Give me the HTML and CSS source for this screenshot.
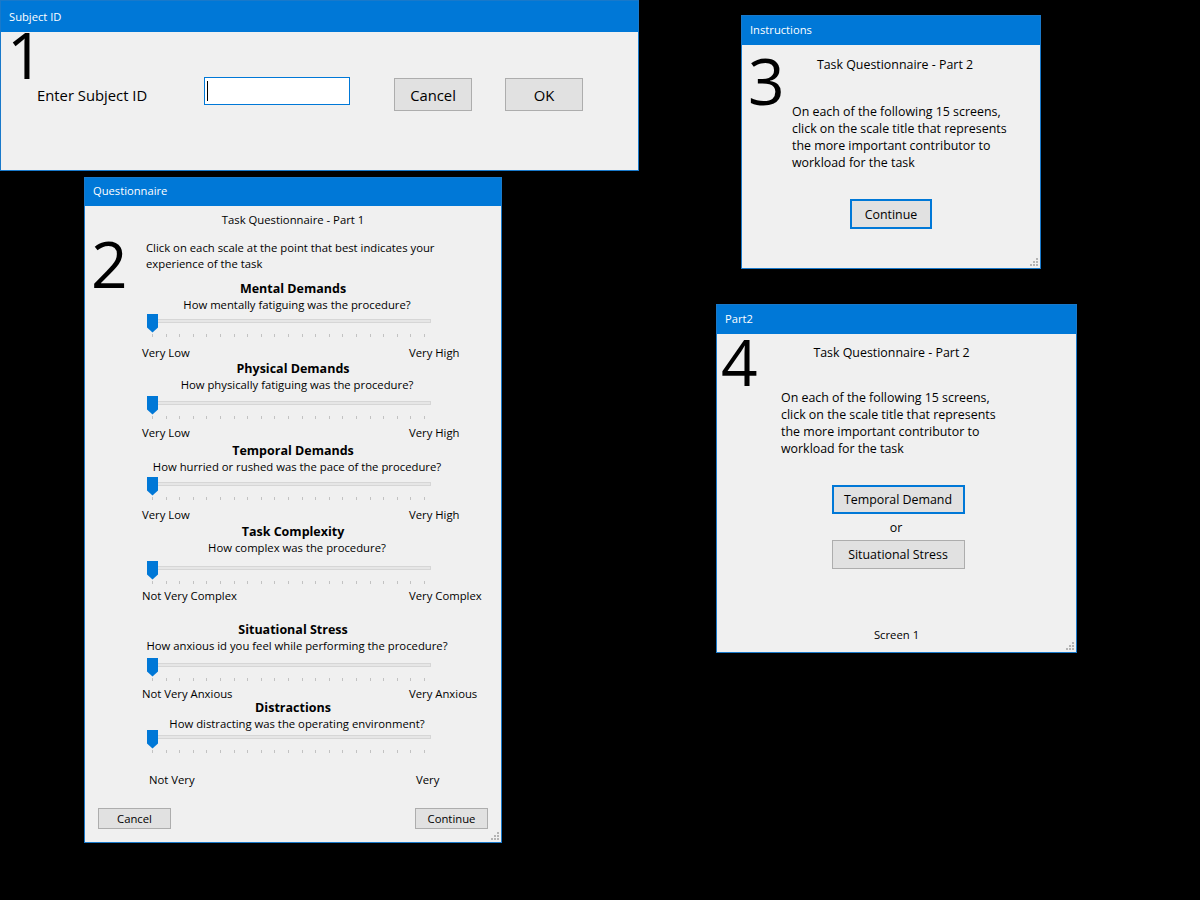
FILE: index.html
```html
<!DOCTYPE html>
<html lang="en">
<head>
<meta charset="utf-8">
<title>Workload questionnaire windows</title>
<link rel="stylesheet" href="styles.css">
</head>
<body class="desktop">

<section class="win win-subject">
  <header class="titlebar">Subject ID</header>
  <div class="win-body subject-body">
    <span class="marker marker-1">1</span>
    <div class="subject-row">
      <label class="subject-label">Enter Subject ID</label>
      <div class="textbox"><span class="caret"></span></div>
      <button class="btn btn-lg btn-cancel">Cancel</button>
      <button class="btn btn-lg">OK</button>
    </div>
  </div>
</section>

<section class="win win-quest">
  <header class="titlebar">Questionnaire</header>
  <div class="win-body quest-body">
    <span class="marker marker-2">2</span>
    <h1 class="quest-heading">Task Questionnaire - Part 1</h1>
    <p class="quest-intro">Click on each scale at the point that best indicates your<br>experience of the task</p>

    <div class="scale scale-mental">
      <h2 class="scale-title">Mental Demands</h2>
      <p class="scale-q">How mentally fatiguing was the procedure?</p>
      <div class="slider">
        <div class="track"><svg class="thumb" width="11" height="19" viewBox="0 0 11 19"><path d="M0 0H11V13.5L5.5 18.5L0 13.5Z" fill="#0078d7"/></svg></div>
        <div class="ticks"><i></i><i></i><i></i><i></i><i></i><i></i><i></i><i></i><i></i><i></i><i></i><i></i><i></i><i></i><i></i><i></i><i></i><i></i><i></i><i></i><i></i></div>
      </div>
      <div class="scale-ends"><span>Very Low</span><span>Very High</span></div>
    </div>

    <div class="scale scale-physical">
      <h2 class="scale-title">Physical Demands</h2>
      <p class="scale-q">How physically fatiguing was the procedure?</p>
      <div class="slider">
        <div class="track"><svg class="thumb" width="11" height="19" viewBox="0 0 11 19"><path d="M0 0H11V13.5L5.5 18.5L0 13.5Z" fill="#0078d7"/></svg></div>
        <div class="ticks"><i></i><i></i><i></i><i></i><i></i><i></i><i></i><i></i><i></i><i></i><i></i><i></i><i></i><i></i><i></i><i></i><i></i><i></i><i></i><i></i><i></i></div>
      </div>
      <div class="scale-ends"><span>Very Low</span><span>Very High</span></div>
    </div>

    <div class="scale scale-temporal">
      <h2 class="scale-title">Temporal Demands</h2>
      <p class="scale-q">How hurried or rushed was the pace of the procedure?</p>
      <div class="slider">
        <div class="track"><svg class="thumb" width="11" height="19" viewBox="0 0 11 19"><path d="M0 0H11V13.5L5.5 18.5L0 13.5Z" fill="#0078d7"/></svg></div>
        <div class="ticks"><i></i><i></i><i></i><i></i><i></i><i></i><i></i><i></i><i></i><i></i><i></i><i></i><i></i><i></i><i></i><i></i><i></i><i></i><i></i><i></i><i></i></div>
      </div>
      <div class="scale-ends"><span>Very Low</span><span>Very High</span></div>
    </div>

    <div class="scale scale-complexity">
      <h2 class="scale-title">Task Complexity</h2>
      <p class="scale-q">How complex was the procedure?</p>
      <div class="slider">
        <div class="track"><svg class="thumb" width="11" height="19" viewBox="0 0 11 19"><path d="M0 0H11V13.5L5.5 18.5L0 13.5Z" fill="#0078d7"/></svg></div>
        <div class="ticks"><i></i><i></i><i></i><i></i><i></i><i></i><i></i><i></i><i></i><i></i><i></i><i></i><i></i><i></i><i></i><i></i><i></i><i></i><i></i><i></i><i></i></div>
      </div>
      <div class="scale-ends"><span>Not Very Complex</span><span>Very Complex</span></div>
    </div>

    <div class="scale scale-stress">
      <h2 class="scale-title">Situational Stress</h2>
      <p class="scale-q">How anxious id you feel while performing the procedure?</p>
      <div class="slider">
        <div class="track"><svg class="thumb" width="11" height="19" viewBox="0 0 11 19"><path d="M0 0H11V13.5L5.5 18.5L0 13.5Z" fill="#0078d7"/></svg></div>
        <div class="ticks"><i></i><i></i><i></i><i></i><i></i><i></i><i></i><i></i><i></i><i></i><i></i><i></i><i></i><i></i><i></i><i></i><i></i><i></i><i></i><i></i><i></i></div>
      </div>
      <div class="scale-ends"><span>Not Very Anxious</span><span>Very Anxious</span></div>
    </div>

    <div class="scale scale-distract">
      <h2 class="scale-title">Distractions</h2>
      <p class="scale-q">How distracting was the operating environment?</p>
      <div class="slider">
        <div class="track"><svg class="thumb" width="11" height="19" viewBox="0 0 11 19"><path d="M0 0H11V13.5L5.5 18.5L0 13.5Z" fill="#0078d7"/></svg></div>
        <div class="ticks"><i></i><i></i><i></i><i></i><i></i><i></i><i></i><i></i><i></i><i></i><i></i><i></i><i></i><i></i><i></i><i></i><i></i><i></i><i></i><i></i><i></i></div>
      </div>
      <div class="scale-ends"><span>Not Very</span><span>Very</span></div>
    </div>

    <div class="quest-footer">
      <button class="btn btn-sm">Cancel</button>
      <button class="btn btn-sm">Continue</button>
    </div>
  </div>
  <svg class="grip" width="10" height="10" viewBox="0 0 10 10"><g fill="#b4b4b4"><rect x="7" y="1" width="2" height="2"/><rect x="4" y="4" width="2" height="2"/><rect x="7" y="4" width="2" height="2"/><rect x="1" y="7" width="2" height="2"/><rect x="4" y="7" width="2" height="2"/><rect x="7" y="7" width="2" height="2"/></g></svg>
</section>

<section class="win win-instr">
  <header class="titlebar">Instructions</header>
  <div class="win-body instr-body">
    <span class="marker marker-3">3</span>
    <h1 class="part2-heading">Task Questionnaire - Part 2</h1>
    <p class="part2-text">On each of the following 15 screens,<br>click on the scale title that represents<br>the more important contributor to<br>workload for the task</p>
    <div class="instr-actions">
      <button class="btn btn-md btn-default">Continue</button>
    </div>
  </div>
  <svg class="grip" width="10" height="10" viewBox="0 0 10 10"><g fill="#b4b4b4"><rect x="7" y="1" width="2" height="2"/><rect x="4" y="4" width="2" height="2"/><rect x="7" y="4" width="2" height="2"/><rect x="1" y="7" width="2" height="2"/><rect x="4" y="7" width="2" height="2"/><rect x="7" y="7" width="2" height="2"/></g></svg>
</section>

<section class="win win-part2">
  <header class="titlebar">Part2</header>
  <div class="win-body part2-body">
    <span class="marker marker-4">4</span>
    <h1 class="part2-heading part2-heading-b">Task Questionnaire - Part 2</h1>
    <p class="part2-text part2-text-b">On each of the following 15 screens,<br>click on the scale title that represents<br>the more important contributor to<br>workload for the task</p>
    <div class="choice">
      <button class="btn btn-choice btn-default">Temporal Demand</button>
      <span class="choice-or">or</span>
      <button class="btn btn-choice">Situational Stress</button>
    </div>
    <p class="screen-no">Screen 1</p>
  </div>
  <svg class="grip" width="10" height="10" viewBox="0 0 10 10"><g fill="#b4b4b4"><rect x="7" y="1" width="2" height="2"/><rect x="4" y="4" width="2" height="2"/><rect x="7" y="4" width="2" height="2"/><rect x="1" y="7" width="2" height="2"/><rect x="4" y="7" width="2" height="2"/><rect x="7" y="7" width="2" height="2"/></g></svg>
</section>

</body>
</html>
```

FILE: styles.css
```css
* {
  box-sizing: border-box;
}

html, body {
  margin: 0;
  padding: 0;
}

.desktop {
  position: relative;
  width: 1200px;
  height: 900px;
  overflow: hidden;
  background: #000;
  font-family: "Open Sans", "Noto Sans", sans-serif;
  font-size: 11.3px;
  color: #000;
}

h1, h2, p {
  margin: 0;
  font-weight: normal;
}

/* ---------- windows ---------- */
.win {
  position: absolute;
  display: flex;
  flex-direction: column;
  background: #f0f0f0;
  border: 1px solid #1979ca;
}

.titlebar {
  flex: none;
  display: flex;
  align-items: center;
  height: 29px;
  padding: 0 0 2px 8px;
  background: #0078d7;
  color: #fff;
  font-size: 11.2px;
}

.win-body {
  position: relative;
  flex: 1;
  display: flex;
  flex-direction: column;
}

.grip {
  position: absolute;
  right: 1px;
  bottom: 1px;
}

.marker {
  position: absolute;
  font-size: 64px;
  line-height: 46px;
  color: #000;
}

/* ---------- button ---------- */
.btn {
  font-family: inherit;
  color: #000;
  background: #e1e1e1;
  border: 1px solid #adadad;
  padding: 0;
  margin: 0;
}

.btn-default {
  border: 2px solid #0078d7;
}

/* ---------- window 1 ---------- */
.win-subject {
  left: 0;
  top: 0;
  width: 639px;
  height: 171px;
}

.win-subject .titlebar {
  height: 31px;
  padding-bottom: 0;
}

.marker-1 {
  left: 6px;
  top: 0;
}

.subject-row {
  display: flex;
  align-items: flex-start;
  padding: 45px 0 0 36px;
}

.subject-label {
  width: 167px;
  margin-top: 8px;
  font-size: 14.8px;
  line-height: 20px;
}

.textbox {
  width: 146px;
  height: 28px;
  background: #fff;
  border: 1px solid #0078d7;
  padding: 3px 0 0 2px;
}

.caret {
  display: block;
  width: 1px;
  height: 20px;
  background: #000;
}

.btn-lg {
  width: 78px;
  height: 33px;
  margin-top: 1px;
  font-size: 14.8px;
}

.btn-cancel {
  margin: 1px 33px 0 44px;
}

/* ---------- window 2 ---------- */
.win-quest {
  left: 84px;
  top: 177px;
  width: 418px;
  height: 666px;
}

.win-quest .titlebar {
  height: 28px;
  padding-bottom: 3px;
}

.marker-2 {
  left: 6px;
  top: 35px;
}

.quest-heading {
  margin-top: 6px;
  text-align: center;
  font-size: 11.3px;
  line-height: 16px;
}

.quest-intro {
  margin-top: 12px;
  padding-left: 61px;
  line-height: 16px;
}

.scale {
  display: flex;
  flex-direction: column;
}

.scale-title {
  text-align: center;
  font-size: 12.5px;
  font-weight: bold;
  line-height: 16px;
}

.scale-q {
  text-align: center;
  padding-left: 8px;
  line-height: 16px;
}

.slider {
  display: flex;
  flex-direction: column;
  width: 283px;
  height: 32px;
  margin-left: 63px;
}

.track {
  position: relative;
  flex: none;
  height: 4px;
  margin-top: 7px;
  background: #e6e6e6;
  border: 1px solid #d6d6d6;
}

.ticks {
  display: flex;
  justify-content: space-between;
  height: 3px;
  margin-top: 11px;
  padding: 0 6px 0 4px;
}

.ticks i {
  display: block;
  width: 1px;
  height: 3px;
  background: #c2c2c2;
}

.thumb {
  position: absolute;
  left: -2px;
  top: -6px;
}

.scale-ends {
  display: grid;
  grid-template-columns: 267px auto;
  padding-left: 57px;
  line-height: 16px;
}

.scale-mental { margin-top: 9px; }
.scale-physical { margin-top: 0; }
.scale-temporal { margin-top: 2px; }
.scale-complexity { margin-top: 1px; }
.scale-stress { margin-top: 18px; }
.scale-distract { margin-top: -2px; }

.scale-mental .track { margin-top: 6px; }
.scale-physical .track { margin-top: 8px; }
.scale-complexity .track { margin-top: 10px; }
.scale-stress .track { margin-top: 9px; }

.scale-distract .slider {
  height: 40px;
}

.scale-distract .track {
  margin-top: 3px;
}

.scale-distract .scale-ends {
  padding-left: 64px;
}

.quest-footer {
  display: flex;
  justify-content: space-between;
  margin-top: auto;
  padding: 0 13px 13px;
}

.btn-sm {
  width: 73px;
  height: 21px;
  font-size: 11.3px;
}

/* ---------- windows 3 & 4 ---------- */
.win-instr {
  left: 741px;
  top: 15px;
  width: 300px;
  height: 254px;
}

.marker-3 {
  left: 6px;
  top: 13px;
}

.part2-heading {
  margin-top: 11px;
  padding-left: 8px;
  text-align: center;
  font-size: 12.4px;
  line-height: 18px;
}

.part2-text {
  margin-top: 29px;
  padding-left: 50px;
  font-size: 12.4px;
  line-height: 17px;
}

.instr-actions {
  display: flex;
  justify-content: center;
  margin-top: 28px;
}

.btn-md {
  width: 82px;
  height: 30px;
  font-size: 12.4px;
}

.win-part2 {
  left: 716px;
  top: 304px;
  width: 361px;
  height: 349px;
}

.marker-4 {
  left: 4px;
  top: 5px;
}

.part2-heading-b {
  margin-top: 10px;
  padding-left: 0;
  padding-right: 10px;
}

.part2-text-b {
  margin-top: 27px;
  padding-left: 64px;
}

.choice {
  display: flex;
  flex-direction: column;
  align-items: center;
  margin-top: 28px;
  padding-left: 3px;
}

.btn-choice {
  width: 133px;
  height: 29px;
  font-size: 12.4px;
}

.choice-or {
  font-size: 12.4px;
  line-height: 17px;
  margin: 5px 0 4px;
  padding-right: 4px;
}

.screen-no {
  margin-top: auto;
  margin-bottom: 9px;
  text-align: center;
  font-size: 11.3px;
  line-height: 16px;
}
```
